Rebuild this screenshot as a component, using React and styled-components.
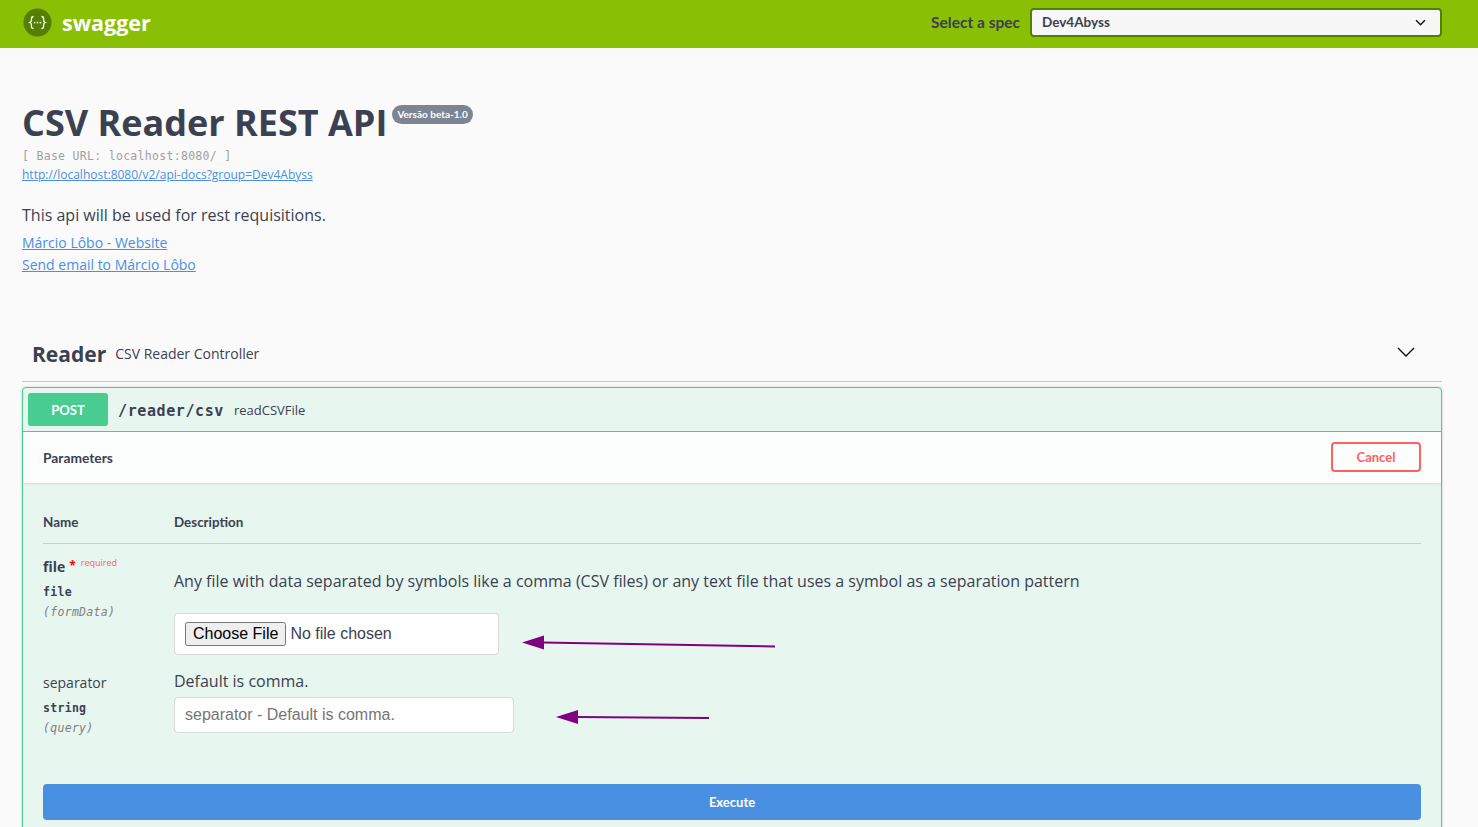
import React from 'react'
import styled, { createGlobalStyle } from 'styled-components'

const HEADING = '"Lato", "Noto Sans", sans-serif'
const BODY = '"Open Sans", "Noto Sans", sans-serif'
const MONO = '"DejaVu Sans Mono", monospace'

const GlobalStyle = createGlobalStyle`
  html, body {
    margin: 0;
    padding: 0;
    overflow: hidden;
    height: 827px;
    background: #fafafa;
    color: #3b4151;
    font-family: ${BODY};
  }
  * {
    box-sizing: border-box;
  }
`

const Topbar = styled.header`
  display: flex;
  align-items: center;
  justify-content: space-between;
  height: 48px;
  padding: 0 36px 3px 23px;
  background: #89bf04;
`

const Brand = styled.div`
  display: flex;
  align-items: center;
  gap: 10px;
  font-family: ${BODY};
  font-size: 21.5px;
  font-weight: 700;
  color: #fff;
`

const SpecPicker = styled.div`
  display: flex;
  align-items: center;
  gap: 10px;
`

const SpecLabel = styled.span`
  font-family: ${HEADING};
  font-size: 15.5px;
  line-height: 18px;
  margin-bottom: 1px;
  font-weight: 700;
  color: #3b4151;
`

const SpecSelect = styled.div`
  display: flex;
  align-items: center;
  justify-content: space-between;
  width: 412px;
  height: 29px;
  padding: 0 14px 1px 10px;
  border: 2px solid #547f00;
  border-radius: 4px;
  background: #f7f7f7;
  font-family: ${HEADING};
  font-size: 13.5px;
  font-weight: 700;
`

const Wrapper = styled.main`
  width: 1420px;
  margin: 0 0 0 22px;
`

const Info = styled.section`
  padding-top: 52px;
`

const TitleRow = styled.div`
  display: flex;
  align-items: flex-start;
  gap: 5px;
`

const Title = styled.h1`
  margin: 0;
  font-family: ${BODY};
  font-size: 36px;
  line-height: 45px;
  font-weight: 700;
`

const Version = styled.span`
  margin-top: 5px;
  padding: 0 5px;
  height: 19px;
  line-height: 19px;
  border-radius: 57px;
  background: #7d8492;
  color: #fff;
  font-family: ${HEADING};
  font-size: 10px;
  font-weight: 700;
`

const BaseUrl = styled.div`
  font-family: ${MONO};
  font-size: 11.5px;
  letter-spacing: 0.3px;
  line-height: 16px;
  margin-top: 3px;
  color: #a0a0a0;
`

const InfoLink = styled.a`
  display: block;
  color: #4990e2;
  font-size: ${({ size }) => size}px;
  line-height: ${({ size }) => (size > 12 ? 22 : 20)}px;
  margin-top: ${({ size }) => (size > 12 ? 0 : 1)}px;
  text-decoration: underline;
`

const Lead = styled.p`
  margin: 19px 0 6px;
  font-size: 16px;
  line-height: 22px;
`

const SectionHeader = styled.div`
  display: flex;
  align-items: center;
  height: 53px;
  margin-top: 53px;
  padding: 0 26px 3px 10px;
  border-bottom: 1px solid #c4c5c8;
`

const SectionName = styled.h4`
  margin: 0 9px 0 0;
  font-family: ${BODY};
  font-size: 21px;
  font-weight: 700;
`

const SectionNote = styled.span`
  flex: 1;
  font-size: 14px;
`

const Operation = styled.div`
  position: relative;
  margin-top: 5px;
  padding-bottom: 30px;
  border: 1px solid #49cc90;
  border-radius: 4px;
  background: #e7f6ef;
  box-shadow: 0 0 3px rgba(0, 0, 0, 0.19);
`

const Summary = styled.div`
  display: flex;
  align-items: center;
  height: 44px;
  padding: 0 5px;
  border-bottom: 1px solid #49cc90;
`

const Method = styled.span`
  width: 80px;
  height: 33px;
  line-height: 35px;
  border-radius: 3px;
  background: #49cc90;
  color: #fff;
  text-align: center;
  font-family: ${HEADING};
  font-size: 13px;
  font-weight: 700;
`

const Path = styled.span`
  margin: 2px 10px 0;
  font-family: ${MONO};
  font-size: 15px;
  letter-spacing: 0.6px;
  font-weight: 700;
  color: #3b4151;
`

const OperationId = styled.span`
  font-size: 13px;
`

const ParamsHead = styled.div`
  display: flex;
  align-items: center;
  justify-content: space-between;
  height: 51px;
  padding: 0 20px 2px;
  background: rgba(255, 255, 255, 0.85);
  box-shadow: 0 1px 2px rgba(0, 0, 0, 0.1);
`

const ParamsTitle = styled.h4`
  margin: 2px 0 0;
  font-family: ${HEADING};
  font-size: 13.8px;
  font-weight: 700;
`

const CancelButton = styled.button`
  width: 90px;
  height: 30px;
  padding: 0;
  border: 2px solid #ff6060;
  border-radius: 4px;
  background: transparent;
  color: #ff6060;
  font-family: ${HEADING};
  font-size: 13px;
  font-weight: 700;
`

const Params = styled.div`
  padding: 19px 20px 0;
`

const ParamsGrid = styled.div`
  display: grid;
  grid-template-columns: 131px 1fr;
`

const ColHead = styled.div`
  height: 42px;
  padding-top: 12px;
  border-bottom: 1px solid rgba(59, 65, 81, 0.2);
  font-family: ${HEADING};
  font-size: 13.4px;
  line-height: 17px;
  font-weight: 700;
`

const NameCell = styled.div`
  padding-top: ${({ compact }) => (compact ? 17 : 12)}px;
`

const ParamName = styled.div`
  display: flex;
  align-items: flex-start;
  font-size: 14px;
  line-height: 22px;
  font-weight: ${({ required }) => (required ? 700 : 400)};
`

const Star = styled.span`
  margin-left: 4px;
  color: #f00;
  font-size: 12px;
  line-height: 20px;
`

const RequiredTag = styled.span`
  margin-left: 5px;
  color: #ff6060;
  font-size: 9px;
  line-height: 14px;
  font-weight: 400;
`

const ParamType = styled.div`
  margin-top: 4px;
  font-family: ${MONO};
  font-size: 11.5px;
  letter-spacing: 0.3px;
  line-height: 20px;
  font-weight: 700;
`

const ParamIn = styled.div`
  font-family: ${MONO};
  font-size: 11.5px;
  letter-spacing: 0.3px;
  line-height: 20px;
  font-style: italic;
  color: #808080;
`

const DescCell = styled.div`
  padding-top: ${({ compact }) => (compact ? 15 : 26)}px;
`

const Description = styled.p`
  margin: 0;
  font-size: 16px;
  line-height: 22px;
`

const FileBox = styled.div`
  display: flex;
  align-items: center;
  width: 325px;
  height: 42px;
  margin-top: 21px;
  padding-left: 10px;
  border: 1px solid #d9d9d9;
  border-radius: 4px;
  background: #fff;
`

const FileInput = styled.input`
  font-family: "Liberation Sans", Arial, sans-serif;
  font-size: 16px;
  color: #3b4151;
`

const TextInput = styled.input`
  display: block;
  width: 340px;
  height: 36px;
  margin-top: 5px;
  padding: 0 10px;
  border: 1px solid #d9d9d9;
  border-radius: 4px;
  background: #fff;
  font-family: "Liberation Sans", Arial, sans-serif;
  font-size: 16px;
  &::placeholder {
    color: #757575;
  }
`

const ExecuteButton = styled.button`
  display: block;
  width: 100%;
  height: 36px;
  margin-top: 46px;
  border: 0;
  border-radius: 4px;
  background: #4990e2;
  color: #fff;
  font-family: ${HEADING};
  font-size: 13px;
  font-weight: 700;
`

const Arrow = styled.svg`
  position: absolute;
  left: ${({ x }) => x}px;
  top: ${({ y }) => y}px;
`

const ChevronIcon = styled.svg`
  margin-bottom: ${({ lift }) => lift || 0}px;
`

function Logo() {
  return (
    <svg width="29" height="29" viewBox="0 0 29 29">
      <circle cx="14.5" cy="14.5" r="14" fill="#547f00" />
      <path
        d="M10.5 8.5c-1.8 0-2.1.8-2.1 2.2v1.6c0 1.1-.4 1.8-1.6 2.2 1.2.4 1.6 1.1 1.6 2.2v1.6c0 1.4.3 2.2 2.1 2.2M18.5 8.5c1.8 0 2.1.8 2.1 2.2v1.6c0 1.1.4 1.8 1.6 2.2-1.2.4-1.6 1.1-1.6 2.2v1.6c0 1.4-.3 2.2-2.1 2.2"
        fill="none"
        stroke="#fff"
        strokeWidth="1.3"
      />
      <circle cx="11.6" cy="14.6" r="0.9" fill="#fff" />
      <circle cx="14.5" cy="14.6" r="0.9" fill="#fff" />
      <circle cx="17.4" cy="14.6" r="0.9" fill="#fff" />
    </svg>
  )
}

function Chevron({ size, width, lift }) {
  return (
    <ChevronIcon lift={lift} width={size} height={size} viewBox="0 0 20 20">
      <path d="M2 6l8 8 8-8" fill="none" stroke="#111" strokeWidth={width} />
    </ChevronIcon>
  )
}

function App() {
  return (
    <>
      <GlobalStyle />
      <Topbar>
        <Brand>
          <Logo />
          swagger
        </Brand>
        <SpecPicker>
          <SpecLabel>Select a spec</SpecLabel>
          <SpecSelect>
            Dev4Abyss
            <Chevron size={11} width={2.8} />
          </SpecSelect>
        </SpecPicker>
      </Topbar>
      <Wrapper>
        <Info>
          <TitleRow>
            <Title>CSV Reader REST API</Title>
            <Version>Versão beta-1.0</Version>
          </TitleRow>
          <BaseUrl>[ Base URL: localhost:8080/ ]</BaseUrl>
          <InfoLink href="#" size={12}>http://localhost:8080/v2/api-docs?group=Dev4Abyss</InfoLink>
          <Lead>This api will be used for rest requisitions.</Lead>
          <InfoLink href="#" size={14}>Márcio Lôbo - Website</InfoLink>
          <InfoLink href="#" size={14}>Send email to Márcio Lôbo</InfoLink>
        </Info>
        <SectionHeader>
          <SectionName>Reader</SectionName>
          <SectionNote>CSV Reader Controller</SectionNote>
          <Chevron size={20} width={1.4} lift={4} />
        </SectionHeader>
        <Operation>
          <Summary>
            <Method>POST</Method>
            <Path>/reader/csv</Path>
            <OperationId>readCSVFile</OperationId>
          </Summary>
          <ParamsHead>
            <ParamsTitle>Parameters</ParamsTitle>
            <CancelButton>Cancel</CancelButton>
          </ParamsHead>
          <Params>
            <ParamsGrid>
              <ColHead>Name</ColHead>
              <ColHead>Description</ColHead>
              <NameCell>
                <ParamName required>
                  file<Star>*</Star>
                  <RequiredTag>required</RequiredTag>
                </ParamName>
                <ParamType>file</ParamType>
                <ParamIn>(formData)</ParamIn>
              </NameCell>
              <DescCell>
                <Description>
                  Any file with data separated by symbols like a comma (CSV files) or any text file that uses a symbol as a separation pattern
                </Description>
                <FileBox>
                  <FileInput type="file" />
                </FileBox>
              </DescCell>
              <NameCell compact>
                <ParamName>separator</ParamName>
                <ParamType>string</ParamType>
                <ParamIn>(query)</ParamIn>
              </NameCell>
              <DescCell compact>
                <Description>Default is comma.</Description>
                <TextInput placeholder="separator - Default is comma." />
              </DescCell>
            </ParamsGrid>
            <ExecuteButton>Execute</ExecuteButton>
          </Params>
          <Arrow x={499} y={247} width={254} height={16} viewBox="0 0 254 16">
            <path d="M0 7.5L22 .5v14z" fill="purple" />
            <path d="M20 7.5L253 11.5" stroke="purple" strokeWidth="2" fill="none" />
          </Arrow>
          <Arrow x={533} y={321} width={154} height={16} viewBox="0 0 154 16">
            <path d="M0 8L22 1v14z" fill="purple" />
            <path d="M20 8L153 9" stroke="purple" strokeWidth="2" fill="none" />
          </Arrow>
        </Operation>
      </Wrapper>
    </>
  )
}

export default App
